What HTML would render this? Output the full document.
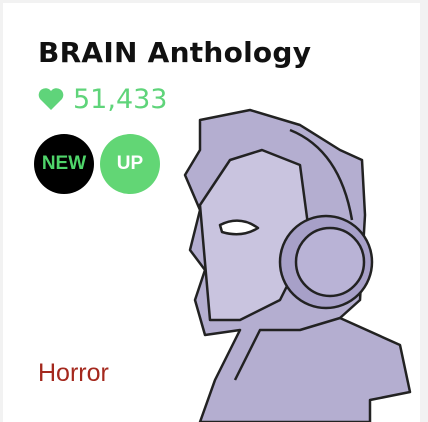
<!DOCTYPE html>
<html><head><style>
html,body{margin:0;padding:0;background:#f2f2f2;}
.card{position:absolute;left:3px;top:3px;width:417px;height:419px;background:#fff;overflow:hidden;font-family:"Liberation Sans",sans-serif;}
.t{position:absolute;left:35px;top:33px;font-size:28px;font-weight:bold;color:#111;letter-spacing:0.25px;font-family:"DejaVu Sans","Liberation Sans",sans-serif;}
.l{position:absolute;left:35px;top:81px;font-size:27px;color:#5fd47a;font-family:"DejaVu Sans",sans-serif;}
.l svg{vertical-align:-2px;margin-right:9px}
.b{position:absolute;top:131px;width:60px;height:60px;border-radius:50%;display:flex;align-items:center;justify-content:center;font-weight:bold;font-size:19px;}
.h{position:absolute;left:35px;top:356px;font-size:25px;color:#a4281d;}
svg.ill{position:absolute;left:0;top:0}
</style></head><body><div class="card">
<svg class="ill" width="417" height="419" viewBox="3 3 417 419">
<g stroke="#222" stroke-width="2.5" stroke-linejoin="round" fill="#b4aed0">
<path d="M200 120 L250 110 L300 125 L340 150 L362 160 L365 215 L360 300 L340 318 L400 345 L410 392 L370 400 L370 422 L200 422 L215 380 L240 330 L205 335 L195 300 L205 270 L190 250 L200 210 L185 175 L200 150 Z"/>
<path d="M200 205 L230 160 L262 150 L300 165 L310 240 L280 300 L240 320 L210 320 Z" fill="#c9c4df"/>
<circle cx="326" cy="262" r="46" fill="#a7a0c8"/>
<circle cx="330" cy="262" r="34" fill="#b9b3d6"/>
<path d="M290 130 Q340 150 352 220" fill="none"/>
<path d="M220 225 Q240 215 258 228 Q242 238 222 232 Z" fill="#fff"/>
<path d="M235 380 L260 330 L300 330 L340 318" fill="none"/>
</g>
</svg>
<div class="t">BRAIN Anthology</div>
<div class="l"><svg width="26" height="22" viewBox="0 0 26 22"><path d="M13 22 L2 11 A6 6 0 0 1 13 3 A6 6 0 0 1 24 11 Z" fill="#5fd47a"/></svg>51,433</div>
<div class="b" style="left:31px;background:#000;color:#4fd46a">NEW</div>
<div class="b" style="left:97px;background:#62d675;color:#fff">UP</div>
<div class="h">Horror</div>
</div></body></html>
